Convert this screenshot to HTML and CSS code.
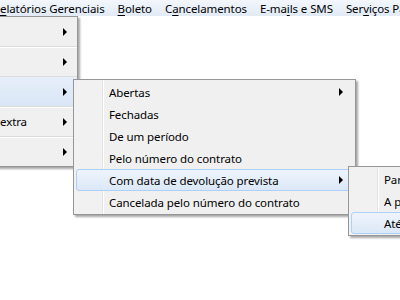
FILE: index.html
```html
<!doctype html>
<html>
<head>
 <title>Menu</title>
 <meta name=viewport content="width=device-width, initial-scale=1">
 <link rel="stylesheet" href="styles.css">
</head>
<body>
<div class=menubar>
 <span class="top first"><u>e</u>latórios Gerenciais</span>
 <span class=top><u>B</u>oleto</span>
 <span class=top>C<u>a</u>ncelamentos</span>
 <span class=top>E-ma<u>i</u>ls e SMS</span>
 <span class=top>Ser<u>v</u>iços Parceiros</span>
</div>

<!-- first level, mostly off screen on the left -->
<div class="menu m1">
 <div class=row><span></span><i class=arr></i></div>
 <div class=row><span></span><i class=arr></i></div>
 <div class="row hot"><span></span><i class=arr></i></div>
 <div class=row><span>extra</span><i class=arr></i></div>
 <div class=row><span></span><i class=arr></i></div>
</div>

<div class="menu m2">
 <div class=item><span>Abertas</span><i class=arr></i></div>
 <div class=item><span>Fechadas</span></div>
 <div class=item><span>De um período</span></div>
 <div class=item><span>Pelo número do contrato</span></div>
 <div class="item hot"><span>Com data de devolução prevista</span><i class=arr></i></div>
 <div class=item><span>Cancelada pelo número do contrato</span></div>
</div>

<div class="menu m3">
 <div class=item><span>Para hoje</span></div>
 <div class=item><span>A partir de</span></div>
 <div class="item hot"><span>Até</span></div>
</div>
</body>
</html>
```
FILE: styles.css
```css
html, body {
  margin:0;
  width:400px;
  height:300px;
  overflow:hidden;
  background:#ffffff;
  font-family:"Noto Sans", "Open Sans", sans-serif;
  font-size:11.5px;
  letter-spacing:-0.1px;
  color:#000000;
}
.menubar {
  display:flex;
  height:16px;
  align-items:center;
  white-space:nowrap;
  background:linear-gradient(#f3f7fc, #e2eaf5);
}
.top {padding:0 6px 0 7px}
.top.first {padding-left:0}
.top u {text-decoration-thickness:1px; text-underline-offset:2px}

.menu {
  position:absolute;
  background:#f0f0f0;
  border:1px solid #979797;
  box-shadow:2px 2px 2px rgba(0,0,0,0.35);
  white-space:nowrap;
}
.arr {
  width:0;
  height:0;
  border-top:4px solid transparent;
  border-bottom:4px solid transparent;
  border-left:4px solid #000000;
}

/* first level: tall rows with divider lines */
.m1 {
  left:-30px;
  top:16px;
  width:107px;
  border-left:none;
}
.m1 .row {
  display:flex;
  align-items:center;
  justify-content:space-between;
  height:29px;
  padding:0 10px 0 30px;
  border-bottom:1px solid #dcdcdc;
  box-shadow:0 1px 0 #ffffff;
}
.m1 .row:last-child {border-bottom:none; box-shadow:none}
.m1 .row.hot {background:linear-gradient(#e6eef9, #d9e6f6)}

/* cascading submenus */
.m2, .m3 {
  padding:1px 2px;
  background:linear-gradient(90deg, #f1f1f1 28px, #e2e3e3 28px, #e2e3e3 29px, #ffffff 29px, #ffffff 30px, #f0f0f0 30px);
}
.m2 {left:73px; top:79px; width:277px}
.m3 {left:348px; top:166px; width:80px}
.item {
  display:flex;
  align-items:center;
  justify-content:space-between;
  height:22px;
  padding:0 9px 0 32px;
  border:1px solid transparent;
  box-sizing:border-box;
}
.item.hot {
  border-color:#aecff7;
  border-radius:3px;
  background:linear-gradient(#eef4fc, #dce8f7);
}
```
